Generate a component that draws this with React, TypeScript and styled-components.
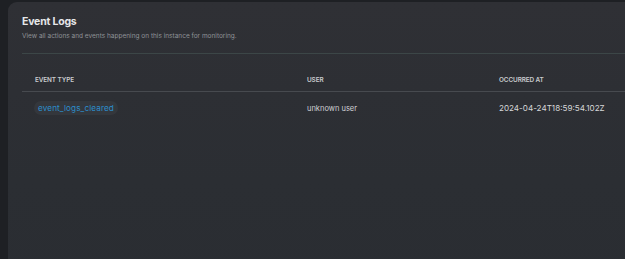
import React from 'react'
import styled, { createGlobalStyle } from 'styled-components'

const GlobalStyle = createGlobalStyle`
  html, body {
    margin: 0;
    padding: 0;
    background: #1e2024;
    font-family: Inter, "Noto Sans", sans-serif;
  }
`

interface LogEntry {
  eventType: string
  user: string
  occurredAt: string
}

const logs: LogEntry[] = [
  {
    eventType: 'event_logs_cleared',
    user: 'unknown user',
    occurredAt: '2024-04-24T18:59:54.102Z',
  },
]

const App: React.FC = () => {
  return (
    <StyledPage>
      <GlobalStyle />
      <StyledCard>
        <StyledTitle>Event Logs</StyledTitle>
        <StyledSubtitle>
          View all actions and events happening on this instance for monitoring.
        </StyledSubtitle>
        <StyledDivider />
        <StyledTable>
          <StyledHeadRow>
            <StyledHeadCell>Event Type</StyledHeadCell>
            <StyledHeadCell>User</StyledHeadCell>
            <StyledHeadCell>Occurred At</StyledHeadCell>
          </StyledHeadRow>
          {logs.map((log, i) => (
            <StyledRow key={i}>
              <StyledCell>
                <StyledPill>{log.eventType}</StyledPill>
              </StyledCell>
              <StyledCell>{log.user}</StyledCell>
              <StyledCell>
                <StyledDate>{log.occurredAt}</StyledDate>
              </StyledCell>
            </StyledRow>
          ))}
        </StyledTable>
      </StyledCard>
    </StyledPage>
  )
}

const StyledPage = styled.div`
  height: 259px;
  padding: 2px 0 0 8px;
  box-sizing: border-box;
  overflow: hidden;
`

const StyledCard = styled.div`
  height: 300px;
  width: 640px;
  border-radius: 9px 0 0 0;
  background: linear-gradient(180deg, #2f3035 0%, #2b2e33 60%, #2a2d32 100%);
  padding: 13px 0 0 14px;
  box-sizing: border-box;
`

const StyledTitle = styled.h1`
  margin: 0;
  color: #e6e7e9;
  font-size: 10.5px;
  font-weight: 700;
  line-height: 14px;
  letter-spacing: -0.2px;
`

const StyledSubtitle = styled.p`
  margin: 3px 0 0;
  color: #8f9297;
  font-size: 6.5px;
  line-height: 8px;
`

const StyledDivider = styled.div`
  margin-top: 13px;
  height: 1px;
  background: #3c4647;
`

const StyledTable = styled.div`
  margin-top: 22px;
`

const StyledHeadRow = styled.div`
  display: grid;
  grid-template-columns: 272px 192px 1fr;
  padding: 0 0 7px 13px;
  border-bottom: 1px solid #474a4f;
`

const StyledHeadCell = styled.div`
  color: #c9cbce;
  font-size: 6.4px;
  font-weight: 600;
  line-height: 8px;
  text-transform: uppercase;
  letter-spacing: -0.1px;
`

const StyledRow = styled.div`
  display: grid;
  grid-template-columns: 272px 192px 1fr;
  align-items: center;
  padding: 9px 0 0 13px;
`

const StyledCell = styled.div`
  color: #cfd1d4;
  font-size: 7.5px;
  line-height: 14px;
`

const StyledPill = styled.span`
  display: inline-block;
  margin-left: -1px;
  padding: 0 4px;
  border-radius: 7px;
  background: #34373c;
  color: #2c8dcb;
  font-size: 8.2px;
  line-height: 14px;
  letter-spacing: 0.1px;
`

const StyledDate = styled.span`
  font-size: 8.1px;
  color: #d6d7d9;
`

export default App
